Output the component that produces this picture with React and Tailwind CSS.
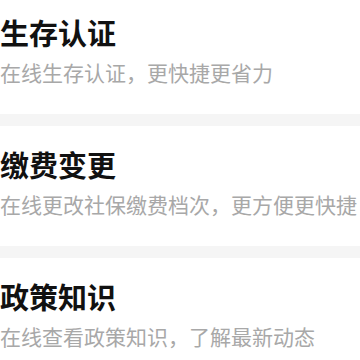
const items = [
  { title: "生存认证", desc: "在线生存认证，更快捷更省力" },
  { title: "缴费变更", desc: "在线更改社保缴费档次，更方便更快捷" },
  { title: "政策知识", desc: "在线查看政策知识，了解最新动态" },
];

const App = () => {
  return (
    <div
      className="w-[360px] h-[360px] overflow-hidden bg-white"
      style={{ fontFamily: '"Noto Sans CJK SC", "Noto Sans", sans-serif' }}
    >
      <div className="-mt-[6px]">
        {items.map((item, index) => (
          <div key={index}>
            {index > 0 && <div className="h-[12px] bg-[#f5f5f5]" />}
            <div className="h-[120px] pt-[24px] whitespace-nowrap">
              <h2 className="text-[29px] leading-[29px] font-bold text-[#111111]">{item.title}</h2>
              <p className="mt-[15px] text-[21px] leading-[21px] text-[#a8a8a8]">{item.desc}</p>
            </div>
          </div>
        ))}
      </div>
    </div>
  );
};

export default App;
